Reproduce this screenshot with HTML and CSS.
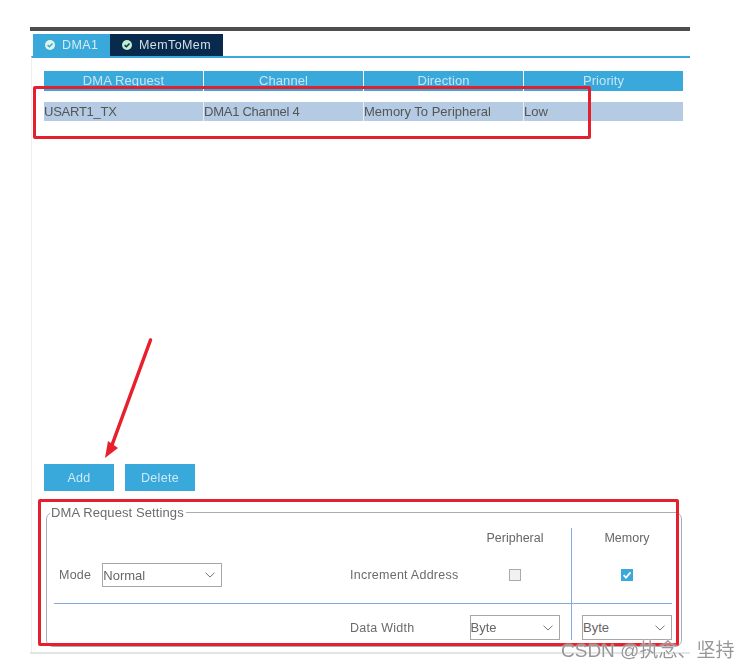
FILE: index.html
```html
<!DOCTYPE html>
<html lang="en">
<head>
<meta charset="utf-8">
<title>DMA Settings</title>
<link rel="stylesheet" href="styles.css">
</head>
<body>
<div class="shot">
  <main class="frame">
    <div class="topbar"></div>
    <nav class="tabs">
      <div class="tab tab-active">
        <svg class="tick" viewBox="0 0 10 10"><circle cx="5" cy="5" r="5" fill="#dff3e6"/><path d="M2.6 5.1 4.4 6.8 7.5 3.6" fill="none" stroke="#39a9dc" stroke-width="1.5"/></svg>
        <span>DMA1</span>
      </div>
      <div class="tab tab-dark">
        <svg class="tick" viewBox="0 0 10 10"><circle cx="5" cy="5" r="5" fill="#c5eccf"/><path d="M2.6 5.1 4.4 6.8 7.5 3.6" fill="none" stroke="#0b2f52" stroke-width="1.5"/></svg>
        <span>MemToMem</span>
      </div>
    </nav>
    <section class="content">
      <div class="grid-head">
        <div class="hcell">DMA Request</div>
        <div class="hcell">Channel</div>
        <div class="hcell">Direction</div>
        <div class="hcell">Priority</div>
      </div>
      <div class="grid-row">
        <div class="cell cell-tight">USART1_TX</div>
        <div class="cell cell-tight">DMA1 Channel 4</div>
        <div class="cell">Memory To Peripheral</div>
        <div class="cell">Low</div>
      </div>
      <div class="actions">
        <button class="btn">Add</button>
        <button class="btn">Delete</button>
      </div>
      <fieldset class="settings">
        <legend class="legend">DMA Request Settings</legend>
        <div class="form">
          <div class="f-head f-blank"></div>
          <div class="f-head f-blank"></div>
          <div class="f-head f-center f-per">Peripheral</div>
          <div class="f-head f-center f-mem">Memory</div>

          <div class="f-mid f-mode"><span class="lbl">Mode</span><div class="sel sel-mode"><span>Normal</span><svg class="chev" viewBox="0 0 10 6"><path d="M.5.7 5 5 9.500.7" fill="none" stroke="#777" stroke-width="1"/></svg></div></div>
          <div class="f-mid"><span class="lbl">Increment Address</span></div>
          <div class="f-mid f-center f-per"><span class="check"></span></div>
          <div class="f-mid f-center f-mem"><span class="check check-on"><svg viewBox="0 0 12 12"><path d="M2.600 6.200 5 8.600 9.500 3.400" fill="none" stroke="#fff" stroke-width="1.800"/></svg></span></div>

          <div class="f-low"></div>
          <div class="f-low"><span class="lbl">Data Width</span></div>
          <div class="f-low f-center f-per"><div class="sel sel-byte sel-per"><span>Byte</span><svg class="chev" viewBox="0 0 10 6"><path d="M.5.7 5 5 9.500.7" fill="none" stroke="#777" stroke-width="1"/></svg></div></div>
          <div class="f-low f-center f-mem"><div class="sel sel-byte"><span>Byte</span><svg class="chev" viewBox="0 0 10 6"><path d="M.5.7 5 5 9.500.7" fill="none" stroke="#777" stroke-width="1"/></svg></div></div>
        </div>
      </fieldset>
    </section>
  </main>
  <div class="mark mark-top"></div>
  <div class="mark mark-bottom"></div>
  <svg class="arrow" viewBox="0 0 60 130"><path d="M50.500 5 12 110" fill="none" stroke="#e8202c" stroke-width="3.500" stroke-linecap="round"/><path d="M5 123 8 106 18 113Z" fill="#e8202c"/></svg>
  <div class="watermark">CSDN @执念、坚持</div>
</div>
</body>
</html>
```
FILE: styles.css
```css
* { box-sizing: border-box; }
html, body { margin: 0; background: #fff; }
body { font-family: "Liberation Sans", Arial, sans-serif; color: #666; }
.shot { position: relative; width: 748px; height: 670px; overflow: hidden; filter: blur(.55px); }
.frame { margin: 27px 0 0 30px; width: 660px; height: 627px; display: flex; flex-direction: column; border-bottom: 2px solid #e2e5e8; }
.topbar { height: 4px; background: #4e4e4e; flex: none; }
.tabs { display: flex; margin: 3px 0 0 3px; height: 22px; flex: none; }
.tab { display: flex; align-items: center; gap: 7px; padding-left: 12px; font-size: 12.500px; letter-spacing: .4px; }
.tick { width: 10px; height: 10px; flex: none; }
.tab-active { width: 77px; background: #39a9dc; color: #d5ecf7; }
.tab-dark { width: 113px; background: #072a4d; color: #d5dfe8; }
.content { flex: 1; margin-left: 1px; border-top: 2px solid #39a9dc; border-left: 1px solid #eceef0; display: flex; flex-direction: column; padding: 13px 7px 0 12px; min-height: 0; }
.grid-head, .grid-row { display: grid; grid-template-columns: repeat(4, 159px); column-gap: 1px; width: 639px; }
.grid-head { height: 20px; }
.hcell { background: #39a9dc; color: #c8e5f4; font-size: 13px; line-height: 20px; text-align: center; letter-spacing: .1px; }
.grid-row { height: 19px; margin-top: 11px; background: #e6eef6; }
.cell { background: #b4cbe3; color: #555; font-size: 13px; line-height: 19px; }
.cell-tight { letter-spacing: -.25px; }
.actions { display: flex; gap: 11px; margin-top: 343px; }
.btn { width: 70px; height: 27px; border: 0; padding: 0; background: #39a9dc; color: #cfe9f6; font: 12.500px "Liberation Sans", Arial, sans-serif; letter-spacing: .3px; }
.settings { margin: 14px 0 0 2px; padding: 0 0 0 7px; width: 636px; height: 142px; border: 1px solid #a9adb1; border-radius: 7px; min-width: 0; }
.legend { margin-left: -4px; padding: 0 2px 0 1px; font-size: 13px; line-height: 15px; color: #6c6c6c; letter-spacing: .1px; }
.form { display: grid; grid-template-columns: 296px 110px 111px 101px; grid-template-rows: 19px 57px 36px; margin-top: 8px; font-size: 12.500px; }
.f-head { display: flex; align-items: center; }
.f-center { display: flex; justify-content: center; }
.f-per { padding-right: 1px; }
.f-mid { display: flex; align-items: center; border-bottom: 1px solid #8aa8dc; }
.f-low { display: flex; align-items: flex-end; }
.f-low > .lbl { margin-bottom: 5px; }
.f-mem { border-left: 1px solid #8aa8dc; padding-left: 10px; }
.f-mode { padding-left: 5px; gap: 11px; }
.lbl { white-space: nowrap; color: #6b6b6b; letter-spacing: .25px; }
.sel { display: flex; align-items: center; justify-content: space-between; height: 25px; border: 1px solid #a5a8ab; background: #fff; padding: 0 6px 0 0; color: #666; font-size: 13px; }
.sel-mode { width: 120px; height: 24px; }
.sel-byte { width: 90px; }
.sel-per { margin-right: 1px; }
.chev { width: 10px; height: 6px; }
.check { width: 12px; height: 12px; border: 1px solid #a8abae; background: #f0f1f2; display: block; }
.check-on { border: 0; background: #39a9dc; display: flex; }
.check-on svg { width: 12px; height: 12px; }
.mark { position: absolute; border: 3px solid #e3202e; border-radius: 2px; }
.mark-top { left: 33px; top: 86px; width: 558px; height: 53px; }
.mark-bottom { left: 38px; top: 499px; width: 641px; height: 147px; }
.arrow { position: absolute; left: 100px; top: 335px; width: 60px; height: 130px; }
.watermark { position: absolute; left: 561px; top: 640px; font-size: 19px; line-height: 22px; color: #979797; white-space: nowrap; font-family: "Liberation Sans", "Noto Sans CJK SC", sans-serif; text-shadow: 0 0 2px #fff; }
```
